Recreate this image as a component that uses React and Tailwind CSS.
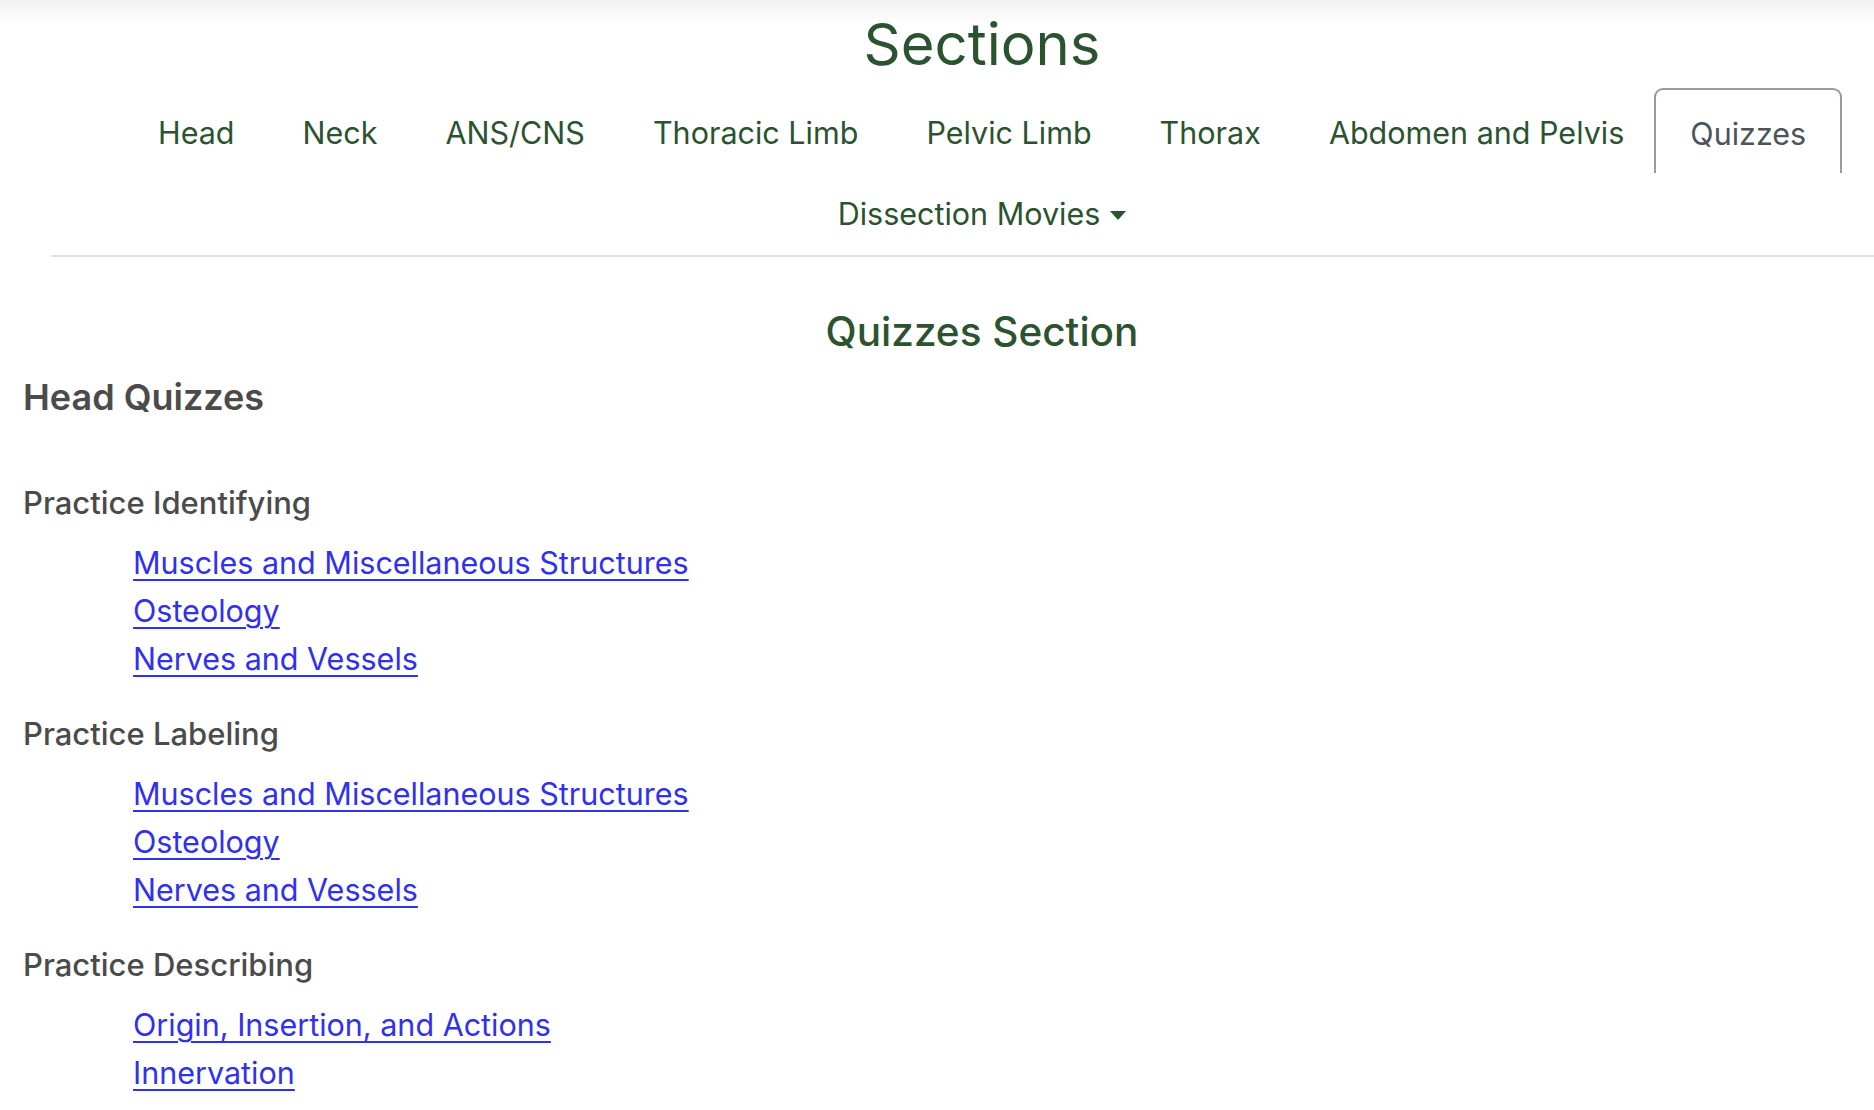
import React from "react";

const tabs = ["Head", "Neck", "ANS/CNS", "Thoracic Limb", "Pelvic Limb", "Thorax", "Abdomen and Pelvis"];

const groups = [
  {
    title: "Practice Identifying",
    links: ["Muscles and Miscellaneous Structures", "Osteology", "Nerves and Vessels"],
  },
  {
    title: "Practice Labeling",
    links: ["Muscles and Miscellaneous Structures", "Osteology", "Nerves and Vessels"],
  },
  {
    title: "Practice Describing",
    links: ["Origin, Insertion, and Actions", "Innervation"],
  },
];

function QuizGroup({ title, links }) {
  return (
    <div className="mb-[33px]">
      <h5 className="text-[31px] leading-[36px] font-medium text-[#4b4b4b]">{title}</h5>
      <ul className="mt-[18px] pl-[110px] flex flex-col">
        {links.map((l, i) => (
          <li key={i} className="h-[48px] leading-[48px]">
            <a href="#" className="text-[30.5px] text-[#3030f0] underline underline-offset-[5px] decoration-2">
              {l}
            </a>
          </li>
        ))}
      </ul>
    </div>
  );
}

export default function App() {
  return (
    <div className="min-h-screen bg-white font-['Inter',sans-serif] overflow-hidden">
      <header className="bg-[linear-gradient(to_bottom,#f1f1f1,#ffffff_24px)]">
        <h1 className="pl-[90px] text-center text-[58px] leading-[88px] text-[#2c5330]">Sections</h1>

        <nav className="ml-[51px] border-b-2 border-[#dee2e6]">
          <ul className="flex items-stretch h-[85px] pl-[73px]">
            {tabs.map((t) => (
              <li key={t} className="px-[34px] flex items-center pt-[4px] text-[30.5px] text-[#2c5330]">
                {t}
              </li>
            ))}
            <li className="-ml-[4px] px-[34px] flex items-center pt-[4px] text-[30.5px] text-[#4d5358] border-2 border-b-0 border-[#9b9b9b] rounded-t-[9px]">
              Quizzes
            </li>
          </ul>
          <div className="pl-[39px] h-[82px] flex items-center justify-center">
            <button className="flex items-center gap-[10px] text-[30.5px] text-[#2c5330]">
              Dissection Movies
              <svg width="16" height="9" viewBox="0 0 16 9" className="mt-[2px]">
                <path d="M0 0h16L8 9z" fill="#2c5330" />
              </svg>
            </button>
          </div>
        </nav>
      </header>

      <main className="px-[23px]">
        <h2 className="pl-[90px] mt-[52px] text-center text-[40.5px] leading-[46px] font-medium text-[#2c5330]">
          Quizzes Section
        </h2>
        <h3 className="mt-[20px] text-[36px] leading-[44px] font-semibold text-[#4b4b4b]">Head Quizzes</h3>
        <div className="mt-[66px]">
          {groups.map((g) => (
            <QuizGroup key={g.title} {...g} />
          ))}
        </div>
      </main>
    </div>
  );
}
